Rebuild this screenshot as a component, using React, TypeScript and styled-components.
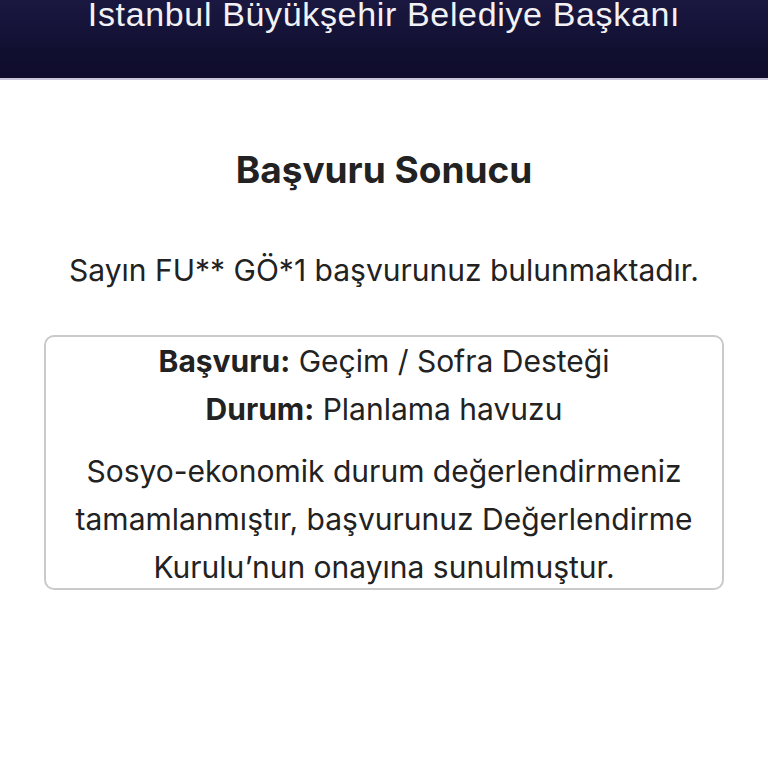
import React from 'react'
import styled, { createGlobalStyle } from 'styled-components'

const GlobalStyle = createGlobalStyle`
  html, body {
    margin: 0;
    padding: 0;
    background: #ffffff;
  }
  body {
    font-family: Inter, "Noto Sans", sans-serif;
    color: #222222;
  }
`

const Header = styled.header`
  height: 78px;
  background: linear-gradient(180deg, #1a1840 0%, #121032 60%, #0f0c2c 100%);
  border-bottom: 2px solid #c9c6dc;
  overflow: hidden;
  display: flex;
  justify-content: center;
`

const HeaderTitle = styled.div`
  margin-top: -9px;
  font-family: "Liberation Sans", Arial, sans-serif;
  font-size: 34px;
  line-height: 46px;
  color: #f2f2f6;
  letter-spacing: 0.65px;
  white-space: nowrap;
`

const Main = styled.main`
  display: flex;
  flex-direction: column;
  align-items: center;
  padding: 66px 44px 0;
`

const Title = styled.h1`
  margin: 0;
  font-size: 37px;
  line-height: 48px;
  font-weight: 700;
  color: #222222;
`

const Lead = styled.p`
  margin: 56px 0 0;
  font-size: 30px;
  line-height: 40px;
  text-align: center;
`

const ResultBox = styled.section`
  align-self: stretch;
  margin-top: 45px;
  border: 2px solid #cacaca;
  border-radius: 10px;
  padding: 0 12px;
  text-align: center;
  font-size: 30px;
`

const Row = styled.div`
  line-height: 48px;
`

const Label = styled.strong`
  font-weight: 700;
`

const Note = styled.p`
  margin: 14px 0 -3px;
  line-height: 48px;
`

export default function App() {
  return (
    <>
      <GlobalStyle />
      <Header>
        <HeaderTitle>İstanbul Büyükşehir Belediye Başkanı</HeaderTitle>
      </Header>
      <Main>
        <Title>Başvuru Sonucu</Title>
        <Lead>Sayın FU** GÖ*1 başvurunuz bulunmaktadır.</Lead>
        <ResultBox>
          <Row>
            <Label>Başvuru:</Label> Geçim / Sofra Desteği
          </Row>
          <Row>
            <Label>Durum:</Label> Planlama havuzu
          </Row>
          <Note>
            Sosyo-ekonomik durum değerlendirmeniz tamamlanmıştır, başvurunuz
            Değerlendirme Kurulu’nun onayına sunulmuştur.
          </Note>
        </ResultBox>
      </Main>
    </>
  )
}
